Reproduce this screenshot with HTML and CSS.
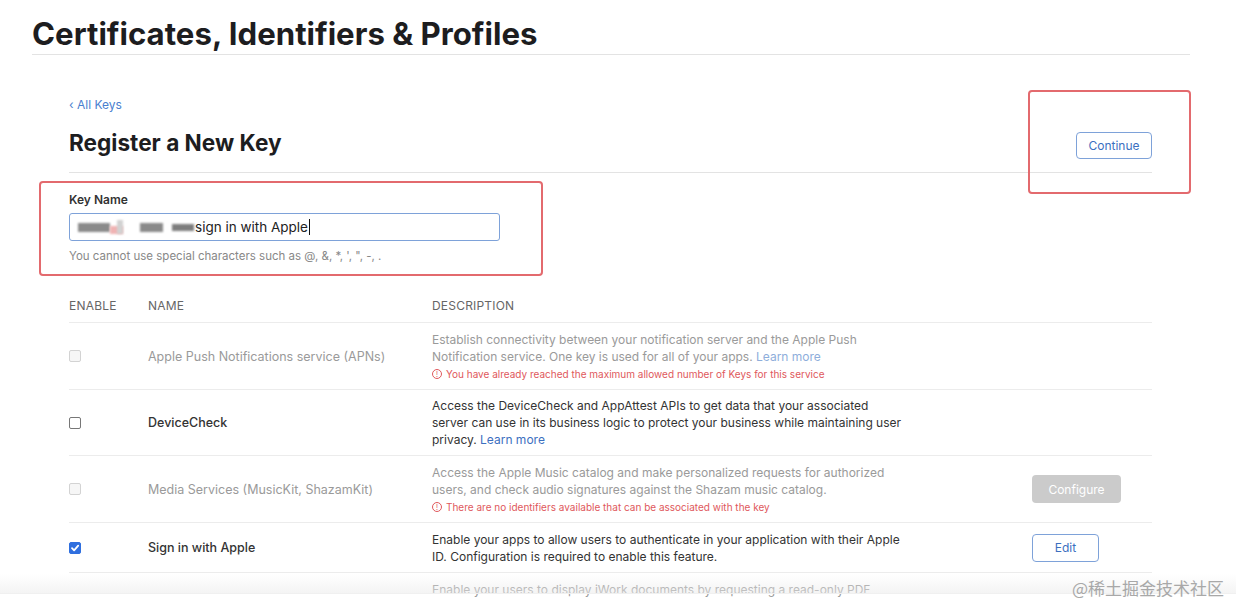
FILE: index.html
```html
<!DOCTYPE html>
<html lang="en">
<head>
<meta charset="utf-8">
<title>Register a New Key</title>
<link rel="stylesheet" href="styles.css">
</head>
<body>
<div class="page">
  <header class="page-header">
    <h1>Certificates, Identifiers &amp; Profiles</h1>
  </header>
  <main class="content">
    <a class="back" href="#">&#8249; All Keys</a>
    <div class="title-row">
      <h2>Register a New Key</h2>
      <div class="continue-wrap">
        <button class="btn btn-outline btn-continue">Continue</button>
      </div>
    </div>
    <section class="field">
      <label class="field-label">Key Name</label>
      <div class="input">
        <span class="blur b1"></span><span class="blur b2"></span><span class="blur b3"></span><span class="blur b4"></span><span class="blur b5"></span><span class="input-text">sign in with Apple</span><span class="caret"></span>
      </div>
      <p class="hint">You cannot use special characters such as @, &amp;, *, ', ", -, .</p>
    </section>

    <div class="table">
      <div class="row head">
        <div class="h-cell">ENABLE</div>
        <div class="h-cell">NAME</div>
        <div class="h-cell">DESCRIPTION</div>
        <div class="h-cell"></div>
      </div>
      <div class="row r1 disabled">
        <div class="c-enable"><span class="cb cb-disabled"></span></div>
        <div class="c-name">Apple Push Notifications service (APNs)</div>
        <div class="c-desc">
          <p>Establish connectivity between your notification server and the Apple Push Notification service. One key is used for all of your apps. <a href="#">Learn more</a></p>
          <p class="warn"><span class="warn-ico">!</span>You have already reached the maximum allowed number of Keys for this service</p>
        </div>
        <div class="c-act"></div>
      </div>
      <div class="row r2">
        <div class="c-enable"><span class="cb"></span></div>
        <div class="c-name">DeviceCheck</div>
        <div class="c-desc">
          <p>Access the DeviceCheck and AppAttest APIs to get data that your associated server can use in its business logic to protect your business while maintaining user privacy. <a href="#">Learn more</a></p>
        </div>
        <div class="c-act"></div>
      </div>
      <div class="row r3 disabled">
        <div class="c-enable"><span class="cb cb-disabled"></span></div>
        <div class="c-name">Media Services (MusicKit, ShazamKit)</div>
        <div class="c-desc">
          <p>Access the Apple Music catalog and make personalized requests for authorized users, and check audio signatures against the Shazam music catalog.</p>
          <p class="warn"><span class="warn-ico">!</span>There are no identifiers available that can be associated with the key</p>
        </div>
        <div class="c-act"><button class="btn btn-disabled">Configure</button></div>
      </div>
      <div class="row r4">
        <div class="c-enable"><span class="cb cb-checked"><svg viewBox="0 0 12 12" width="12" height="12"><path d="M3 6.2 L5.1 8.3 L9.2 3.6" fill="none" stroke="#fff" stroke-width="1.8" stroke-linecap="round" stroke-linejoin="round"/></svg></span></div>
        <div class="c-name">Sign in with Apple</div>
        <div class="c-desc">
          <p>Enable your apps to allow users to authenticate in your application with their Apple ID. Configuration is required to enable this feature.</p>
        </div>
        <div class="c-act"><button class="btn btn-outline btn-edit">Edit</button></div>
      </div>
      <div class="row r5 disabled">
        <div class="c-enable"></div>
        <div class="c-name"></div>
        <div class="c-desc">
          <p>Enable your users to display iWork documents by requesting a read-only PDF</p>
        </div>
        <div class="c-act"></div>
      </div>
    </div>
  </main>

  <div class="annot annot-field"></div>
  <div class="annot annot-continue"></div>
  <div class="bottom-fade"></div>
  <div class="watermark">@稀土掘金技术社区</div>
</div>
</body>
</html>
```

FILE: styles.css
```css
* { box-sizing: border-box; }
html, body { margin: 0; padding: 0; background: #fff; }
body {
  font-family: Inter, "Noto Sans", "Liberation Sans", sans-serif;
  color: #333;
  width: 1236px;
  height: 604px;
  overflow: hidden;
}
.page { position: relative; width: 1236px; height: 604px; overflow: hidden; }

.page-header {
  margin: 0 46px 0 32px;
  padding-top: 16px;
  border-bottom: 1px solid #e3e3e3;
  height: 55px;
}
.page-header h1 {
  margin: 0;
  font-size: 31.2px;
  line-height: 36px;
  font-weight: 700;
  color: #1d1d1f;
  letter-spacing: 0;
}

.content {
  margin: 0 84px 0 69px;
  padding-top: 43px;
}
.back {
  display: block;
  font-size: 12px;
  line-height: 14px;
  color: #4a7fcf;
  text-decoration: none;
}
.title-row {
  display: flex;
  align-items: center;
  justify-content: space-between;
  border-bottom: 1px solid #e3e3e3;
  height: 61px;
}
.title-row h2 {
  margin: 0;
  font-size: 22.6px;
  font-weight: 700;
  color: #1d1d1f;
  letter-spacing: 0;
}
.btn {
  font-family: inherit;
  font-size: 12px;
  border-radius: 4px;
  height: 28px;
  padding: 0 10px;
  cursor: pointer;
}
.btn-outline {
  background: #fff;
  border: 1px solid #7ea2d9;
  color: #3c6fbf;
}
.continue-wrap { display: flex; padding-top: 6px; }
.btn-continue { width: 76px; height: 27px; padding: 0; }

.field { padding-top: 20px; }
.field-label {
  display: block;
  font-size: 12px;
  font-weight: 600;
  color: #333;
  line-height: 14px;
}
.input {
  margin-top: 6px;
  width: 431px;
  height: 28px;
  border: 1px solid #7ea2d9;
  border-radius: 3px;
  display: flex;
  align-items: center;
  padding-left: 8px;
  font-size: 13.5px;
  color: #222;
}
.blur { display: inline-block; height: 9px; filter: blur(1px); }
.b1 { width: 32px; background: #8a8a8a; }
.b2 { width: 13px; background: #f0b3b3; height: 8px; margin-top: 6px; }
.b3 { width: 6px; background: #d2d2d2; margin-left: -6px; height: 14px; }
.b4 { width: 23px; background: #8a8a8a; margin-left: 17px; }
.b5 { width: 22px; background: #7d7d7d; margin-left: 9px; height: 7px; }
.input-text { margin-left: 1px; }
.caret { display: inline-block; width: 1px; height: 16px; background: #111; margin-left: 1px; }
.hint {
  margin: 8px 0 0;
  font-size: 11.5px;
  color: #888;
  line-height: 14px;
}

.table { margin-top: 35px; }
.row {
  display: grid;
  grid-template-columns: 79px 284px 1fr 120px;
  align-items: center;
  border-bottom: 1px solid #ececec;
  font-size: 12.5px;
}
.row.head {
  height: 25px;
  color: #666;
  font-size: 12px;
  letter-spacing: 0.2px;
  align-items: start;
  line-height: 15px;
}
.h-cell { font-weight: 400; }
.r1 { height: 67px; }
.r2 { height: 66px; }
.r3 { height: 67px; }
.r4 { height: 50px; }
.r5 { height: 40px; border-bottom: none; align-items: start; padding-top: 8px; }
.c-desc { font-size: 12px; color: #333; }
.c-desc p { margin: 0; line-height: 17px; max-width: 472px; }
.c-name { color: #333; font-weight: 500; }
.c-desc a { color: #3c6fbf; text-decoration: none; }
.disabled .c-name, .disabled .c-desc { color: #9a9a9a; font-weight: 400; }
.disabled .c-desc a { color: #8eaedb; }
.c-desc p.warn {
  color: #e0585c;
  font-size: 10px;
  margin-top: 2px;
  line-height: 14px;
  display: flex;
  align-items: center;
}
.warn-ico {
  display: inline-flex;
  align-items: center;
  justify-content: center;
  width: 10px;
  height: 10px;
  border: 1px solid #e0585c;
  border-radius: 50%;
  font-size: 7px;
  margin-right: 4px;
  line-height: 1;
}

.cb {
  display: block;
  width: 12px;
  height: 12px;
  border: 1px solid #777;
  border-radius: 2px;
  background: #fff;
}
.cb-disabled { border-color: #d3d3d3; background: #f6f6f6; }
.cb-checked { background: #2f6fdf; border-color: #2f6fdf; position: relative; }
.cb-checked svg { position: absolute; left: -1px; top: -1px; }

.btn-disabled {
  background: #cbcbcb;
  border: none;
  color: #fff;
  width: 89px;
  height: 28px;
  font-size: 12px;
}
.btn-edit { width: 67px; }

.annot {
  position: absolute;
  border: 2px solid #e36a6e;
  border-radius: 4px;
}
.annot-field { left: 39px; top: 181px; width: 504px; height: 95px; }
.annot-continue { left: 1028px; top: 90px; width: 163px; height: 104px; }

.bottom-fade {
  position: absolute;
  left: 0; right: 0;
  top: 574px;
  height: 20px;
  background: linear-gradient(to bottom, rgba(255,255,255,0), rgba(235,235,235,0.55));
  border-bottom: 1px solid #f0f0f0;
}
.watermark {
  position: absolute;
  right: 12px;
  top: 577px;
  font-family: "Noto Sans CJK SC", sans-serif;
  font-size: 17px;
  color: #a8a8a8;
  line-height: 22px;
}
```
